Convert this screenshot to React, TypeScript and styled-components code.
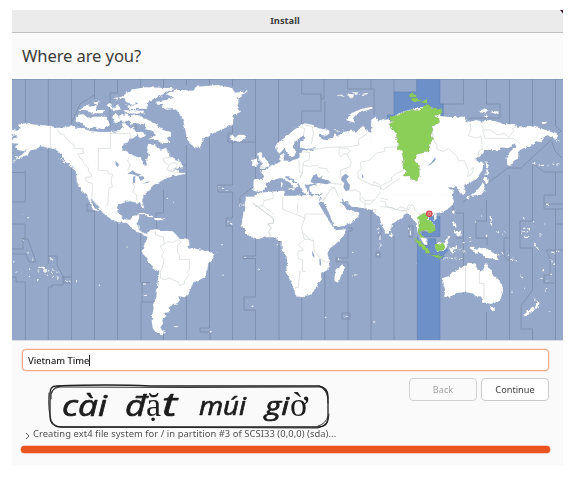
import React from "react";
import styled, { createGlobalStyle } from "styled-components";

const Global = createGlobalStyle`
  * { box-sizing: border-box; }
  body { margin: 0; background: #fff; overflow: hidden; }
`;
const Page = styled.main`
  position: relative;
  width: 573px;
  height: 486px;
  padding: 10px 10px 21px 12px;
  font-family: "Noto Sans", sans-serif;
  color: #3d3d3d;
`;
const Window = styled.section`
  display: flex;
  flex-direction: column;
  width: 551px;
  height: 455px;
  background: #fafafa;
`;
const TitleBar = styled.header`
  position: relative;
  height: 23px;
  flex: none;
  background: #ebebeb;
  border-bottom: 1px solid #bfbfbf;
  font-size: 9.3px;
  font-weight: 700;
  line-height: 21px;
  text-align: center;
  padding-right: 5px;
`;
const Corner = styled.svg`
  position: absolute;
  right: 0;
  top: 0;
`;
const Heading = styled.h1`
  height: 46px;
  flex: none;
  margin: 0;
  padding-left: 10px;
  font-size: 16.6px;
  font-weight: 400;
  line-height: 46px;
  letter-spacing: -0.12px;
`;
const Map = styled.svg`
  display: block;
  flex: none;
  width: 551px;
  height: 262px;
`;
const Controls = styled.div`
  display: flex;
  flex-direction: column;
  padding: 8px 14px 0 10px;
`;
const Field = styled.div`
  display: flex;
  align-items: center;
  height: 22px;
  padding-left: 5px;
  border: 1px solid #f3a78d;
  border-radius: 4px;
  background: #fff;
  font-size: 9.3px;
  font-weight: 500;
  color: #222;
  box-shadow: 0 0 0 0.5px #f8cbbb;
`;
const Caret = styled.i`
  width: 1px;
  height: 11px;
  background: #222;
`;
const Actions = styled.div`
  display: flex;
  justify-content: flex-end;
  gap: 4px;
  margin-top: 7px;
`;
const Button = styled.button<{ $muted?: boolean }>`
  width: 68px;
  height: 23px;
  padding: 0 0 1px;
  border: 1px solid ${(p) => (p.$muted ? "#d2d2d2" : "#cbcbcb")};
  border-radius: 4px;
  background: ${(p) => (p.$muted ? "#fafafa" : "#fff")};
  color: ${(p) => (p.$muted ? "#a2a2a2" : "#3d3d3d")};
  font: 9.2px "Noto Sans", sans-serif;
`;
const Status = styled.div`
  display: flex;
  align-items: center;
  gap: 3px;
  height: 14px;
  margin-top: 25px;
  padding-left: 3px;
  font-size: 9.4px;
  letter-spacing: 0.065px;
  color: #505050;
  white-space: nowrap;
`;
const Chevron = styled.svg`
  width: 5px;
  height: 8px;
  margin-top: 6px;
`;
const Progress = styled.div`
  height: 7px;
  margin: 6px -1px 0;
  border-radius: 4px;
  background: #e95420;
  box-shadow: 0 0 0 0.5px #f29a7c;
`;
const Note = styled.svg`
  position: absolute;
  left: 45px;
  top: 380px;
  width: 290px;
  height: 52px;
`;
const Glyphs = styled.text<{ $serif?: boolean; $size?: number }>`
  font-family: ${(p) => (p.$serif ? '"Liberation Serif", serif' : '"Open Sans", "Noto Sans", sans-serif')};
  font-style: ${(p) => (p.$serif ? "normal" : "italic")};
  font-weight: 400;
  font-size: ${(p) => (p.$serif ? 34 : p.$size ?? 28)}px;
  fill: #1d1d1d;
  stroke: #1d1d1d;
  stroke-width: ${(p) => (p.$serif ? 0 : 0.7)}px;
  stroke-linejoin: round;
`;

type SectorProps = { x: number; y: number; children: React.ReactNode };
const Sector = ({ x, y, children }: SectorProps) => (
  <g transform={`translate(${x} ${y}) scale(.33333)`}>{children}</g>
);

const SEA = "#95a8c9";
const ACTIVE = "#6c90c7";
const GREEN = "#8ccf58";

const OceanZones = () => (
  <g fill="none" stroke="#7b8ba9" strokeWidth=".8">
    <path d="M25.3 79V123M25 202H12M25.3 170V202M25.3 172.500H12M25.300 341V282H16V277H12M25 224H12M25 224V239H21M12 249H23V238M21 239H28L36 262H29L26 254H12" />
    <path d="M48.300 79V126M48.300 148V264M48.300 341V287H52V285H63V277H72M48.500 256H57V265L64 278V283H71.500M71.500 79V126M71.500 163V341M94.500 79V99M94 204H87V211H94.500V341M94.500 95 80 104 72 122" />
    <path d="M117.500 79V93H110V128M117.500 208V341M140.700 79V93H136V130M140.700 232V283M141 302V341M150 282.500H142V302H155M163.500 79V90M163.500 190V213H156L157 230M163.500 333V341M186.500 79V85M186.500 145V341M186 165H181M209.500 79V85M209.500 138V328H200V332H210V341" />
    <path d="M232.500 79V86M232.500 126V133H228V142H255.500V79M232.500 142V185H218V192H232.500V218H226V226H232.500V341M255.500 142V185L240 197V206M255.600 206V211M255.600 235V256H243V258.500H255.500V297H244V310H255.500V341" />
    <path d="M278.600 79V150M279 240V341M301.700 79V94H321V111H301.700V130M301.700 295V341M321 94V99H324V79M324.800 101V128M324.800 272V341M347.700 79V89H374V115M347.700 228H352V231H348V258H336V262H348V341M342 313H350V319H342ZM371 79V89M371 210V341M376 228H381V236H377M376 252H380V257H376Z" />
    <path d="M394 79V92M394 236V341M408 226H413V237H409V226M463.500 79V104H441M463.500 213H453V200M463.500 238V294M463.500 213V238H456M486.500 79V104H500V118H470V132M486.500 200V221H476V238H487V245M486.500 312V341M509.500 79V126M509.500 175V341M509.500 238H504V256L509.500 261" />
    <path d="M532.500 79V127M532.500 163V221H520V248H532.500V290L521 306V329H532.500V341M555.500 79V126L561 131 549 142 521 168H508L488 183 463 202M552 142 555 151 562 158M532 163 544 172H563M555.500 172V195H544V209H563M544 204H563M555.500 209V224H563M555.500 224V260M555.500 341V283H544V275H550V258L546 250H563M555.500 283V255" />
  </g>
);

const Land = () => (
  <g fill="#fff" stroke="#dfe5e8" strokeWidth=".35" strokeLinejoin="round" filter="url(#coast)">
    <path d="M12 129 17 130 21 128 18 125 26 123 33 124.500 50 126 57 128 67 127 72 125 76 128 81 128 90 131 100 132 112 132 120 131 123 127 122 124 125 123 129 127 131 129 133 127 135 131 138 133 135 137 130 139 127 143 123 145 122 150 128 153 137 157 141 158 142 163 145 166 147 165 146 160 149 156 148 151 147 147 148 145 155 144 157 148 160 150 166 148 168 153 170 157 180 161 183 167 178 168 171 171 180 170 179 173 185 173 185 174 173 176 167 178 163 180 158 183 153 185 150 190 145 194 142 200 144 208 142 208 140 203 133 202 130 201 125 202 118 205 117 207 118 213 123 219 130 220 133 216 139 215 139 219 137 221 139 230 143 233 149 234 148 237 140 233 133 229 127 223 117 222 108 217 103 213 99 208 95 203 92 199 90 199 93 205 99 212 97 212 91 206 87 195 82 192 77 183 76 172 74 167 67 162 63 157 59 152 55 149 50 148 40 146 37 149 32 150 27 155 17 159 12 161.500 23 154 27 149 23 151 18 150 15 147 18 144 12 143 12 139 16 138 17 135 12 136Z" />
    <Sector x={0} y={70}>
      <path d="M232 135 248 133 270 145 280 140 320 140 330 165 310 178 290 173 260 175 248 160 225 153ZM235 120 260 105 270 110 290 105 288 120 312 120 308 130 270 130 258 120ZM280 98 299 94 294 106ZM320 106 330 98 339 114 355 106 365 118 340 123ZM335 139 348 130 365 150 345 160ZM358 139 380 130 392 147 375 158 363 150ZM358 85 390 62 450 53 450 85 410 93 405 105 378 96 374 85ZM340 85 352 82 354 89ZM375 105 440 110 442 116 390 117ZM370 121 410 121 430 130 380 130Z" />
      <path d="M185 248 204 278M180 264 196 279M207 284 235 305M45 259 60 265" stroke="#fff" strokeWidth="4" />
    </Sector>
    <Sector x={130} y={70}>
      <path d="M0 60 45 52 132 55 95 75 70 87 52 98 48 115 0 112 25 100 0 94 30 86 0 80 18 70ZM0 122 42 122 40 130 0 130ZM0 138 22 135 50 148 80 163 98 180 123 187 123 197 111 203 118 218 95 220 75 207 55 208 78 196 68 182 48 178 40 162 20 160 0 164ZM20 189 33 185 48 197 30 205ZM0 178 12 170 10 192 0 190Z" />
      <path d="M78 95 103 91 132 84 109 72 135 59 190 62 198 50 265 45 306 54 315 68 353 64 333 78 319 83 328 90 322 110 330 127 310 136 309 163 280 176 242 193 218 206 212 235 193 231 179 220 171 204 165 175 159 151 147 126 130 117 110 119 94 112 102 104 82 104Z" />
      <path d="M299 198 310 194 315 204 325 194 344 195 348 204 326 215 305 209Z" />
      <path d="M366 271 379 266 384 276 379 288 368 287ZM385 250 395 246 398 260 412 272 419 287 405 293 389 293 399 280 387 267Z" />
      <path d="M111 385h3M265 351h3M276 355h5M289 359h3M329 408h3M338 406h3M347 403h4M130 400h2" stroke="#fff" strokeWidth="3" />
    </Sector>
    <Sector x={250} y={70}>
      <path d="M78 225 90 212 110 200 125 185 145 170 165 160 190 165 205 175 235 180 242 190 225 197 208 193 208 203 225 210 245 203 255 190 262 198 285 185 305 182 318 188 330 175 340 168 355 185 367 190 363 165 364 150 378 140 388 160 384 178 393 184 400 173 392 150 415 148 430 160 460 170 460 410 330 410 307 397 215 395 205 395 200 410 -10 410 -3 398 15 378 30 368 60 365 100 362 103 375 100 385 125 390 145 398 155 388 175 388 195 393 210 392 216 370 205 372 190 372 178 362 178 350 190 345 215 340 180 343 165 345 172 360 178 370 169 376 160 367 155 355 148 345 125 328 111 318 104 320 120 332 145 346 135 355 126 343 115 335 100 325 88 325 70 330 55 335 48 350 38 362 25 365 10 362 11 330 35 330 42 318 30 302 48 297 60 290 75 282 92 275 90 255 101 251 101 272 120 272 150 265 148 250 160 240 180 243 200 235 165 237 150 232 150 215 166 205 160 195 148 205 135 215 130 235 139 245 130 260 118 262 112 245 104 235 90 249 80 240Z" />
      <path d="M288 150 304 130 333 117 364 110 369 115 345 122 320 133 309 144 315 158 300 154ZM389 153 408 144 420 163 415 190 395 190Z" />
      <path d="M262 76 279 75 282 80M292 75 310 73 310 80 296 81M307 67 323 68 315 74M325 74 353 70 341 75M115 358 133 355 132 362M93 337h5v14h-6M157 378h14M198 380h9M255 181l12 5M276 178l7 5" strokeWidth="3" />
    </Sector>
    <Sector x={380} y={70}>
      <path d="M-25 175-10 160 0 150 22 153 22 173 31 180 40 140 65 125 115 115 135 108 185 120 180 138 215 142 230 140 253 140 257 152 270 155 290 150 305 160 315 150 345 153 370 163 400 162 412 170 450 168 480 175 505 182 535 195 530 207 513 202 502 195 488 205 486 217 468 214 450 230 430 235 420 240 415 250 414 266 401 272 390 288 382 285 380 262 390 245 410 228 405 220 385 235 365 232 360 240 315 240 305 252 285 270 300 275 310 275 308 300 290 325 275 335 255 345 248 350 257 364 253 375 240 372 238 358 228 352 205 352 212 362 226 360 215 375 222 395 216 408 -40 408Z" />
      <path d="M316 274 322 275 325 298 322 319 316 315 321 295ZM308 330 313 320 329 331 319 340ZM309 338 315 349 308 370 288 375 271 378 286 367 300 350ZM261 378 271 377 265 389ZM295 121 314 118 326 122 317 130 302 128ZM332 122 355 125 347 131 332 127ZM309 138l10-5 5 8ZM485 157l16-2-2 6-12 1Z" />
      <path d="M457 281h5M476 285h6M485 286h8M503 286h5M518 283h5M529 282h9M528 213l10 2M463 279l3 4M499 403h6M310 365h3" stroke="#fff" strokeWidth="3" />
    </Sector>
    <Sector x={130} y={200}>
      <path d="M37 102 50 105 60 90 80 88 100 92 128 94 140 106 150 118 168 115 178 126 178 137 196 146 220 151 235 153 250 164 250 174 235 190 232 206 225 231 208 240 190 247 185 260 175 281 163 292 145 288 150 300 142 310 125 313 118 322 112 322 120 335 103 340 106 350 97 360 99 371 91 382 98 393 108 398 94 403 76 395 68 384 65 360 70 327 72 300 79 292 82 252 88 216 68 203 47 170 37 160 43 131 55 116 50 107Z" />
      <path d="M22 43 35 37 60 46 71 52 55 51 40 43ZM75 54 94 55 103 60 78 61ZM53 58h7M105 60h4M36 42h5" />
      <path d="M39 252h8M38 286h3M45 286h5M133 380h12M274 134h4M260 156h2M274 225h6M293 65h3M300 70h8M304 74h3M344 172h3M353 303h4M366 319h4M383 207h3M328 14h7M346 13h4M238 395h7" stroke="#fff" strokeWidth="3" />
    </Sector>
    <Sector x={0} y={200}>
      <path d="M67 42h2M83 53h5M65 121h6M75 130h3M86 156l-4 5M97 178h4M37 184l3 4M48 216h4M63 220h5M88 206l5 4M87 233h3M111 239h5M150 172l9 9M112 213h6M115 202h20M126 205l14 9M130 212l12 2M134 200l-2 8M146 207v7M155 205l5 8M133 225h5M141 226h3M154 217h5M157 232h5M169 216h7M170 231h6M172 235h4M197 241l6 5M208 244h3M225 245h4M295 256h5M380 140h2" stroke="#edf0f0" strokeWidth="3.500" />
    </Sector>
    <Sector x={250} y={200}>
      <path d="M-12-10-20 40-25 75-15 95 0 110 18 118 50 112 75 112 85 120 95 122 95 150 110 170 112 190 107 215 120 240 130 262 134 277 140 290 160 288 180 285 195 270 205 250 215 240 213 222 235 208 239 185 232 160 240 145 265 125 280 105 288 88 255 91 245 75 225 45 210 15 205-10 213-10 225 15 240 45 252 82 280 78 300 70 325 50 325 38 310 32 298 31 285 22 272 5 270-10 295-10 295 10 305 20 345 25 365 30 378 45 388 48 395 75 408 102 415 95 420 75 435 60 460 52 460-20Z" />
      <path d="M276 192 284 206 272 229 267 245 253 244 254 230 257 208 268 204ZM421 99 428 103 426 112 419 108Z" />
      <path d="M82 135v3M23 206h4M5 319h4M264 178h4M306 157h4M306 229h4M315 225h5M225 352h4M284 349h6M369 366h7M382 87h5M384 98h4M390 105v18M390 130v13M382 164h5" stroke="#fff" strokeWidth="3" />
    </Sector>
    <Sector x={380} y={200}>
      <path d="M-12-15 0 55 12 90 22 102 35 82 35 72 60 58 70 45 80 40 90 45 100 60 110 70 112 95 120 110 130 130 142 132 138 118 122 105 118 95 125 88 140 92 150 100 165 90 165 75 150 60 148 45 160 45 170 40 195 32 215 20 220-1 210-15ZM162 48 169 46 170 57 163 59ZM216 34 224 29 222 44ZM31 99 37 106 36 111 28 107Z" />
      <path d="M186 235 210 227 220 215 238 208 247 198 257 197 264 188 288 191 289 202 300 215 310 209 318 187 326 207 332 211 337 223 355 238 368 260 369 273 360 302 333 312 312 307 302 292 290 292 280 281 257 276 230 279 207 291 193 291 195 270 188 251ZM329 321 343 321 345 329 337 335ZM459 291 469 302 482 311 472 324 464 326 470 308ZM457 320 465 328 450 341 437 350 430 345 446 332Z" />
      <path d="M164 137 177 126 190 130 207 108 206 122 202 137 193 153 171 153ZM207 141 214 146 225 142 231 135 231 145 217 150 228 155 217 161 210 151ZM266 142 277 140 290 149 304 145 318 144 348 164 356 181 330 175 316 175 303 160 285 157ZM219 64 228 68 229 84 219 77ZM221 92 226 89 235 97 244 91 241 109 232 109Z" />
      <path d="M190 174h12M206 175h9M223 174h7M237 178h9M236 150l8-5M248 153h12M249 127l5 2M268 113h5M268 124l6-1M330 47l3 14 2 16M350 93l4 6M364 103h4M372 96h3M318 105l4 2M350 164h9M365 157l5 7M382 166h4M391 178h9M404 182h4M420 225l8 9M433 265h3M394 277h4M430 85h6M423 97h3M430 95h14M436 109h10M445 85l5 6M461 128l15 22M430 55h3M459 65h4M478 105h5M493 72h3M514 157h9M528 154h10M514 178l3 9M520 193h5M487 212h5M484 235h4M511 223h5M498 243h4M500 264l-4 11M506 336h6M498 13h9M285 66h4M303 48h3M109 188v3M86 83v8M91 92v13" stroke="#f4f6f6" strokeWidth="3.500" />
    </Sector>
  </g>
);

const Waters = () => (
  <g fill={SEA}>
    <Sector x={0} y={70}><path d="M346 273 357 283 354 292 347 284ZM382 312 398 301 409 310 424 313 414 319 397 313ZM399 320 406 318 405 338 399 340ZM415 319 430 319 433 326 421 333ZM425 342 448 333 445 338Z" /></Sector>
    <Sector x={250} y={70}><path d="M181 335 190 316 200 312 204 322 211 323 220 315 214 326 235 331 243 338 230 343 207 339 193 341ZM275 321 286 311 297 319 289 328 293 337 300 345 298 361 287 363 280 352 283 340 273 329ZM205 400 210 397 218 409 224 423 218 421ZM274 384 279 388 284 400 293 410 300 412 307 420 293 420 283 408ZM335 310 341 320 337 326Z" /></Sector>
    <Sector x={380} y={70}><path d="M142 287 152 280 164 264 168 263 165 273 150 285Z" /></Sector>
    <Sector x={250} y={200}><path d="M186 151 193 166 193 175 187 166ZM208 178h4l2 21-5-5Z" /></Sector>
    <Sector x={130} y={200}><path d="M173 138 182 137 187 144 176 146Z" /></Sector>
  </g>
);

const LandZones = () => (
  <g fill="none" stroke="#ccd4ce" strokeWidth="1.900" strokeLinejoin="round">
    <Sector x={0} y={70}>
      <path d="M151 168V235M172 176 178 190 190 194 206 214 222 225 223 235 249 235 250 250 235 252 240 265 246 267 251 280 264 292 267 307 273 311 276 320 257 322 257 330 263 337 277 340 277 365 275 390 295 405 304 419M331 188V235H295V301H321L325 311 338 313 333 330 337 350 327 355 323 405 316 409M331 190H390L392 210M388 260 383 272 391 285 383 301M396 338 404 350 399 365 410 375 409 392" />
    </Sector>
    <Sector x={130} y={70}><path d="M108 235 120 250 119 262 100 265 102 276 117 286 128 278 140 280 141 291 119 303M117 286 110 299 125 305 144 308" /></Sector>
    <Sector x={250} y={70}>
      <path d="M150 170 165 176 160 194M165 165 187 170 190 190 184 223M160 245 180 248 177 270 160 277 158 301 155 314 150 325M158 285 178 289 201 286 210 294 231 296 235 308M180 235 210 237 230 232 300 230 327 225 325 208 353 190M268 232 277 235 292 235 300 244 290 252 281 252 273 262 266 252ZM290 252 304 276 300 290 272 300 273 325M450 230 405 232 403 245 382 248 356 272 331 277 334 299 323 305 325 325 366 345 388 350 400 360 430 337 450 325M240 340 275 343M240 350 254 353 265 380M254 353 240 360 228 380 218 392M300 363 316 359 331 368 330 390 344 402 360 403 384 378 392 365M368 345 372 335 390 345 393 360M68 365 70 385 42 392 38 407 15 410M38 407 71 432M35 330 48 345M147 270 148 305 157 310 148 323M143 398V430" />
    </Sector>
    <Sector x={380} y={70}><path d="M155 170 160 209 171 225 171 238 192 244 205 235 231 259 236 272 253 272 265 301 263 320 278 309 281 292 270 300M270 160 273 180 264 197 287 204 305 199 306 239 297 242 295 263M305 165 311 180 330 180 352 195 374 190 386 201 402 183 397 175 409 170M308 180 315 205 400 205 421 222M71 300 47 312 34 322 35 331 2 348M0 410 37 413 49 419 62 410 81 418 85 405 99 405M0 383 23 390" /></Sector>
    <Sector x={130} y={200}><path d="M75 92 77 105 100 112 103 133 90 137 101 157 95 169 102 179 96 207 91 212 92 235 105 239 117 234 130 240 145 246 149 257 163 252 165 239 178 225 171 217 178 209V178H148V164L142 155V136L153 127 145 118 130 127 113 125 103 133M369 9 429 55 430 70 415 72 424 86 416 94 423 104 417 111" /></Sector>
    <Sector x={250} y={200}><path d="M6 8 70 55 71 68 53 72 62 86 54 97 63 110M98-10V28L165 54V42H218M165 54 155 80 157 97 184 122 190 120 193 154 201 161 212 178 230 187 238 182M157 97 163 118 183 118M163 120 145 135 161 150 144 154 145 175 158 180 157 214H167M150 213 145 262H134M335-10 345 2 345 23M345 2 374 0M367 28 378 29 374 39" /></Sector>
    <Sector x={380} y={200}><path d="M257 195V275M298 212V250H312V300M0 3 16 5 18 18 38 25 65 33 84 30 94 16M65 35 74 31 84 40M100 15 105 31 120 43 138 39" /></Sector>
  </g>
);

const ActiveZone = () => (
  <g>
    <g fill={GREEN} stroke="#7c9f6d" strokeWidth="1" filter="url(#coast)">
      <Sector x={380} y={70}>
        <path d="M30 140 50 137 68 126 100 120 118 122 133 105 148 105 155 114 183 115 187 129 162 139 178 146 178 158 155 169 159 179 151 195 158 209 151 219 148 242 130 248 111 252 106 273 118 285 118 321 109 334 92 326 90 317 69 319 78 302 67 290 71 274 65 242 52 235 57 218 49 211 50 191 34 173 27 163 40 155 29 149ZM81 77 96 69 109 76 108 82 89 81ZM95 84 121 87 121 92 107 95 95 90ZM121 94 131 95 140 87 146 95 140 99 125 99Z" />
      </Sector>
      <Sector x={380} y={200}>
        <path d="M112 52 131 40 144 42 144 55 153 67 164 76 167 91 157 97 149 100 140 91 129 91 120 97 124 105 134 112 130 117 119 109 114 98 117 72ZM101 113 116 121 136 138 148 152 151 163 140 158 125 142 113 131ZM151 164 171 166 190 170 188 174 162 170ZM165 135 179 134 191 131 195 141 191 150 177 153 166 147Z" />
      </Sector>
    </g>
    <circle cx="429.300" cy="213.700" r="2.700" fill="#e2898c" stroke="#d74148" strokeWidth="1.200" />
    <circle cx="429.300" cy="213.700" r=".7" fill="#d74148" />
  </g>
);

const WorldMap = () => (
  <Map viewBox="12 79 551 262" aria-label="World time zones">
    <defs>
      <filter id="coast" filterUnits="userSpaceOnUse" x="12" y="79" width="551" height="262" colorInterpolationFilters="sRGB">
        <feTurbulence type="fractalNoise" baseFrequency=".28" numOctaves="2" seed="4" result="noise" />
        <feDisplacementMap in="SourceGraphic" in2="noise" scale="3.500" xChannelSelector="R" yChannelSelector="G" />
      </filter>
    </defs>
    <path fill={SEA} d="M12 79h551v262H12z" />
    <OceanZones />
    <g fill={ACTIVE} stroke="#5d7db0" strokeWidth="1.5">
      <Sector x={380} y={70}><path d="M110 28H180V102H190V150H22V135H42V66H110Z" /></Sector>
      <Sector x={380} y={200}><path d="M145 50H180V110H126V96H145ZM112 110 125 135H145V116H167V130L205 150 190 165 196 175H180V423H112Z" /></Sector>
    </g>
    <Land />
    <Waters />
    <LandZones />
    <ActiveZone />
    <path d="M12 79.500h551" stroke="#788cab" strokeOpacity=".55" />
    <path d="M12 340.500h551" stroke="#d9dce3" />
  </Map>
);

const HandwrittenNote = () => (
  <Note viewBox="45 380 290 52" role="img" aria-label="cài đặt múi giờ">
    <g fill="none" stroke="#202020" strokeLinecap="round">
      <path strokeWidth="1.300" d="M56 386Q110 384 150 386L319 386Q328 388 328 396L328 419Q328 426 319 427H60Q50 426 50 417V394Q50 386 56 386Z" />
      <path strokeWidth=".9" d="M51 399Q50 388 60 387L188 387.500 322 387Q328 390 328 403M319 386Q327 390 328 398M49 393Q48 407 50 415Q51 427 62 427L318 428Q329 425 329 414M318 426Q326 424 328 416M51 393Q54 386 61 386" />
    </g>
    <Glyphs $size={29} x="62" y="416" textLength="45" lengthAdjust="spacingAndGlyphs">cài</Glyphs>
    <Glyphs $size={30} x="125" y="416" textLength="21" lengthAdjust="spacingAndGlyphs">đ</Glyphs>
    <Glyphs $serif x="146" y="416">ặ</Glyphs>
    <Glyphs $size={32} x="162" y="416" textLength="15" lengthAdjust="spacingAndGlyphs">t</Glyphs>
    <Glyphs $size={25} x="199" y="415" textLength="47" lengthAdjust="spacingAndGlyphs">múi</Glyphs>
    <Glyphs $size={25} x="265" y="415" textLength="24" lengthAdjust="spacingAndGlyphs">gi</Glyphs>
    <Glyphs $serif x="290" y="416">ờ</Glyphs>
  </Note>
);

export default function App() {
  return (
    <Page>
      <Global />
      <Window>
        <TitleBar>Install<Corner width="3" height="4"><path d="M0 0h3v4L2 2Z" fill="#300a24" /></Corner></TitleBar>
        <Heading>Where are you?</Heading>
        <WorldMap />
        <Controls>
          <Field>Vietnam Time<Caret /></Field>
          <Actions>
            <Button $muted>Back</Button>
            <Button>Continue</Button>
          </Actions>
          <Status>
            <Chevron viewBox="0 0 5 8"><path d="m1 1 3 3-3 3" fill="none" stroke="#555" /></Chevron>
            <span>Creating ext4 file system for / in partition #3 of SCSI33 (0,0,0) (sda)...</span>
          </Status>
          <Progress />
        </Controls>
      </Window>
      <HandwrittenNote />
    </Page>
  );
}
